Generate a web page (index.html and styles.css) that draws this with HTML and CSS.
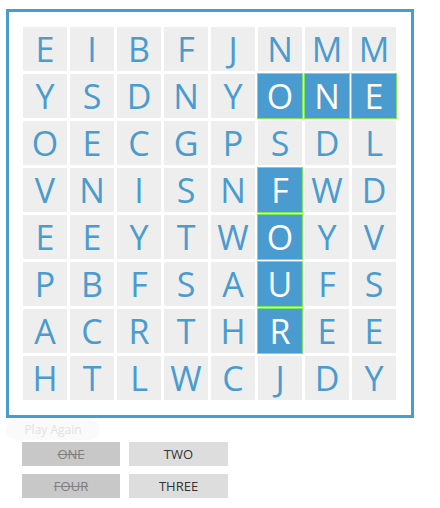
FILE: index.html
```html
<!DOCTYPE html>
<html>
<head>
<meta charset="utf-8">
<link rel="stylesheet" href="styles.css">
</head>
<body>
<div class="board">
  <div class="grid">
    <div class="cell">E</div><div class="cell">I</div><div class="cell">B</div><div class="cell">F</div><div class="cell">J</div><div class="cell">N</div><div class="cell">M</div><div class="cell">M</div>
    <div class="cell">Y</div><div class="cell">S</div><div class="cell">D</div><div class="cell">N</div><div class="cell">Y</div><div class="cell found">O</div><div class="cell found">N</div><div class="cell found">E</div>
    <div class="cell">O</div><div class="cell">E</div><div class="cell">C</div><div class="cell">G</div><div class="cell">P</div><div class="cell">S</div><div class="cell">D</div><div class="cell">L</div>
    <div class="cell">V</div><div class="cell">N</div><div class="cell">I</div><div class="cell">S</div><div class="cell">N</div><div class="cell found">F</div><div class="cell">W</div><div class="cell">D</div>
    <div class="cell">E</div><div class="cell">E</div><div class="cell">Y</div><div class="cell">T</div><div class="cell">W</div><div class="cell found">O</div><div class="cell">Y</div><div class="cell">V</div>
    <div class="cell">P</div><div class="cell">B</div><div class="cell">F</div><div class="cell">S</div><div class="cell">A</div><div class="cell found">U</div><div class="cell">F</div><div class="cell">S</div>
    <div class="cell">A</div><div class="cell">C</div><div class="cell">R</div><div class="cell">T</div><div class="cell">H</div><div class="cell found">R</div><div class="cell">E</div><div class="cell">E</div>
    <div class="cell">H</div><div class="cell">T</div><div class="cell">L</div><div class="cell">W</div><div class="cell">C</div><div class="cell">J</div><div class="cell">D</div><div class="cell">Y</div>
  </div>
</div>
<button class="play">Play Again</button>
<div class="words">
  <div class="word done">ONE</div>
  <div class="word">TWO</div>
  <div class="word done">FOUR</div>
  <div class="word">THREE</div>
</div>
</body>
</html>
```

FILE: styles.css
```css
html, body {
  margin: 0;
  padding: 0;
  background: #ffffff;
  font-family: "Open Sans", "Noto Sans", sans-serif;
}

.board {
  margin: 9px 0 0 6px;
  width: 375px;
  padding: 14px 14px 14px 13px;
  border: 3px solid #4a9bcf;
}

.grid {
  display: grid;
  grid-template-columns: repeat(8, 46px);
  grid-auto-rows: 46px;
  gap: 1px;
}

.cell {
  box-sizing: border-box;
  border: 1px solid #ffffff;
  background: #eeeeee;
  color: #4a9bcf;
  font-size: 34px;
  display: flex;
  align-items: center;
  justify-content: center;
  line-height: 1;
}

.cell.found {
  background: #4a9bcf;
  border-color: #80e45e;
  color: #ffffff;
}

.play {
  display: block;
  margin: 1px 0 0 6px;
  width: 94px;
  height: 21px;
  padding: 0;
  border: none;
  border-radius: 11px;
  background: #fafafa;
  color: #e2e2e2;
  font-family: "Open Sans", "Noto Sans", sans-serif;
  font-size: 12px;
}

.words {
  display: grid;
  grid-template-columns: 98px 99px;
  grid-auto-rows: 24px;
  column-gap: 9px;
  row-gap: 8px;
  margin: 2px 0 0 22px;
}

.word {
  background: #dddddd;
  color: #333333;
  font-size: 13px;
  display: flex;
  align-items: center;
  justify-content: center;
}

.word.done {
  background: #c8c8c8;
  color: #808080;
  text-decoration: line-through;
}
```
